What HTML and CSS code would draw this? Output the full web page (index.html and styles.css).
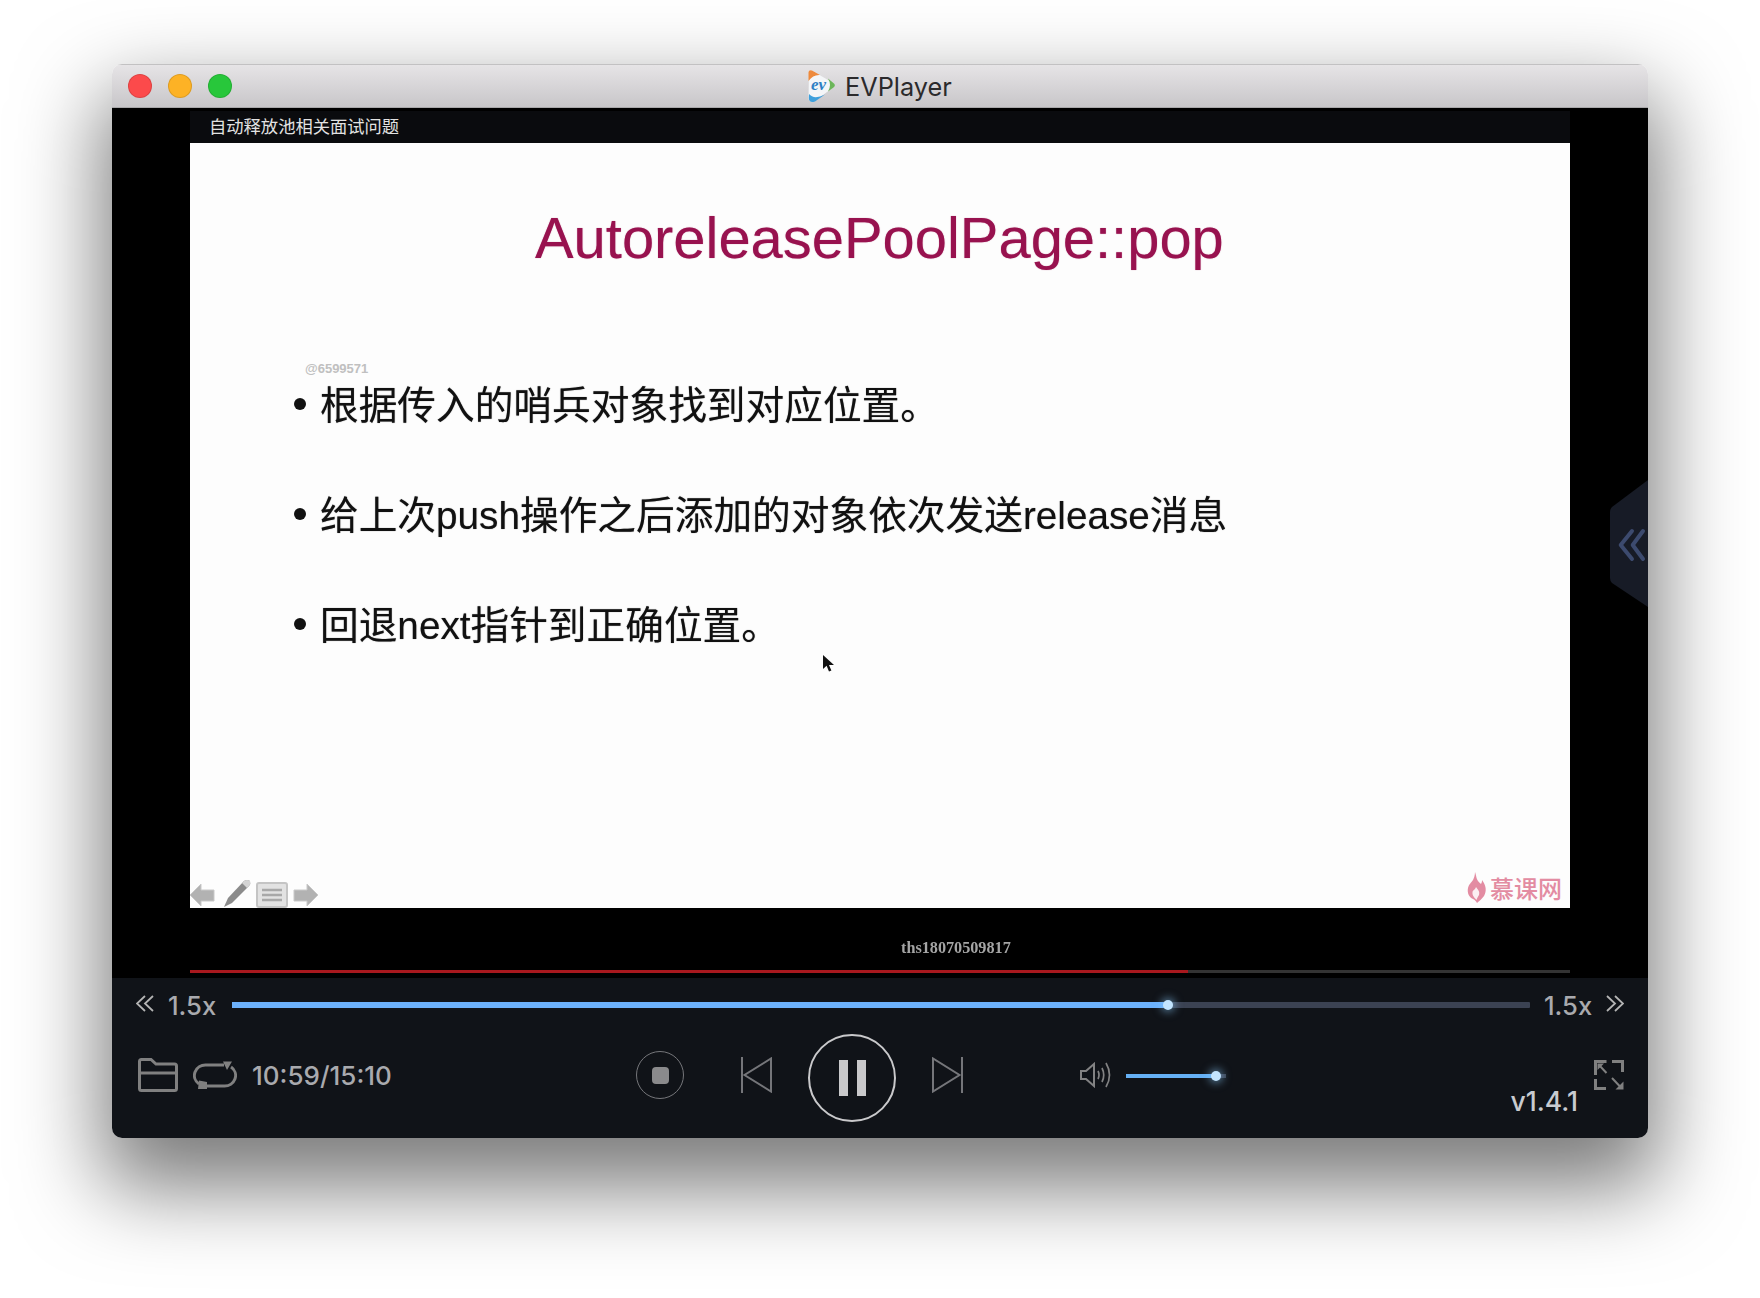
FILE: index.html
```html
<!DOCTYPE html>
<html lang="en">
<head>
    <meta charset="UTF-8" />
    <title>EVPlayer</title>
    <link rel="stylesheet" href="styles.css">
</head>
<body>
    <div class="window">
        <div class="titlebar">
            <div class="lights">
                <span class="light red"></span>
                <span class="light yellow"></span>
                <span class="light green"></span>
            </div>
            <div class="app-title">
                <svg class="app-logo" width="30" height="34" viewBox="0 0 30 34">
                    <path d="M3 3 Q2 0.5 6 1.5 L27 14 Q30 16 27 18.5 L9 32 Q3 34.5 2.5 29 Z" fill="#f4f6f8"/>
                    <path d="M2.5 12 L2.5 3.5 Q2.5 0.5 6 1.5 L14 6 Q7 5.5 2.5 12 Z" fill="#ee8a3c"/>
                    <path d="M22 9.5 L28 14.5 Q30 16.5 27.5 18.5 L22 22.5 Q26 16 22 9.5 Z" fill="#6cb65a"/>
                    <path d="M3 25 Q8 31 19 25.5 L9 32.5 Q3 34.5 2.8 29 Z" fill="#3fa0dc"/>
                    <text x="5" y="21" class="logo-text">ev</text>
                </svg>
                <span>EVPlayer</span>
            </div>
        </div>

        <div class="video">
            <div class="frame">
                <div class="caption">自动释放池相关面试问题</div>
                <div class="slide">
                    <h1>AutoreleasePoolPage::pop</h1>
                    <span class="user-id">@6599571</span>
                    <ul class="points">
                        <li>根据传入的哨兵对象找到对应位置。</li>
                        <li>给上次push操作之后添加的对象依次发送release消息</li>
                        <li>回退next指针到正确位置。</li>
                    </ul>

                    <svg class="pointer" width="14" height="20" viewBox="0 0 14 20">
                        <path d="M1 1 L1 15 L4.6 11.8 L7 17.5 L9.4 16.4 L7 11 L12 11 Z" fill="#111"/>
                    </svg>

                    <div class="slide-tools">
                        <svg width="29" height="26" viewBox="0 0 29 26">
                            <path d="M1 13 L12 2 V8 H25 V19 H12 V24 Z" fill="#b2b2b2" stroke="#c9c9c9"/>
                        </svg>
                        <svg width="30" height="30" viewBox="0 0 30 30">
                            <path d="M2 29 L6 20 L22 3 Q25 1 28 3 Q29 6 27 8 L10 25 Z" fill="#8b8b8b"/>
                            <path d="M22 3 Q25 1 28 3 Q29 6 27 8 L25 10 L20 5 Z" fill="#d4d4d4"/>
                        </svg>
                        <svg width="32" height="26" viewBox="0 0 32 26">
                            <rect x="1" y="1" width="30" height="24" rx="2" fill="#e2e2e2" stroke="#c4c4c4" stroke-width="2"/>
                            <path d="M6 8 H26 M6 13 H26 M6 18 H26" stroke="#a8a8a8" stroke-width="2.4"/>
                        </svg>
                        <svg width="28" height="26" viewBox="0 0 26 26">
                            <path d="M25 13 L14 2 V8 H1 V19 H14 V24 Z" fill="#b2b2b2" stroke="#c9c9c9"/>
                        </svg>
                    </div>

                    <div class="brand">
                        <svg width="20" height="31" viewBox="0 0 20 31">
                            <path d="M8 0 C10 6 9 8 14 12 C15 10 15 9 15 8 C19 13 20 19 17 24 C15 27 12 29 10 31 C9 29 8 28 6 27 C2 25 0 21 1 16 C2 12 4 11 6 8 C7 6 8 3 8 0 Z" fill="#e38ca2"/>
                            <path d="M9 15 C11 18 13 19 12 23 C11 25 10 26 9.5 28 C8 26 5 24 5.5 20 C6 18 8 18 9 15 Z" fill="#fbeef1"/>
                        </svg>
                        <span>慕课网</span>
                    </div>
                </div>
                <div class="frame-foot">
                    <div class="viewer">ths18070509817</div>
                    <div class="buffer"><div class="buffer-fill" style="width: 72.3%"></div></div>
                </div>
            </div>

            <svg class="side-handle" width="38" height="127" viewBox="0 0 38 127">
                <path d="M38 0 L2 27 Q0 29 0 32 V98 Q0 101 2 103 L38 127 Z" fill="#171b26"/>
                <path d="M22 51 L10.7 65 L22 79 M33 51 L22.7 65 L33 79" fill="none" stroke="#3c4a6e" stroke-width="4" stroke-linecap="round" stroke-linejoin="round"/>
            </svg>
        </div>

        <div class="controls">
            <div class="speed-row">
                <svg class="icon-thin" width="18" height="17" viewBox="0 0 18 17">
                    <path d="M9 1 L1 8.5 L9 16 M17 1 L9 8.5 L17 16"/>
                </svg>
                <span class="speed">1.5x</span>
                <div class="seek">
                    <div class="seek-fill" style="width: 72.1%"><span class="thumb"></span></div>
                </div>
                <span class="speed">1.5x</span>
                <svg class="icon-thin" width="18" height="17" viewBox="0 0 18 17">
                    <path d="M1 1 L9 8.5 L1 16 M9 1 L17 8.5 L9 16"/>
                </svg>
            </div>

            <div class="button-row">
                <div class="left-group">
                    <svg class="icon" width="40" height="34" viewBox="0 0 40 34">
                        <path d="M1.5 15 V3.5 Q1.5 1.5 3.5 1.5 H13 L18 6 H36.5 Q38.5 6 38.5 8 V30.5 Q38.5 32.5 36.5 32.5 H3.5 Q1.5 32.5 1.5 30.5 V15 H38.5"/>
                    </svg>
                    <svg width="44" height="28" viewBox="0 0 44 28">
                        <g fill="none" stroke="#808080" stroke-width="3">
                            <path d="M31 4 H13 A11 10.5 0 0 0 6 23"/>
                            <path d="M13 25 H31 A11 10.5 0 0 0 38 6"/>
                        </g>
                        <path d="M30 0.5 L39 0.5 L34 9 Z M6 19.5 L14 21 L14 28 L5 28 Z" fill="#808080"/>
                    </svg>
                    <span class="time">10:59/15:10</span>
                </div>

                <div class="stop"><span></span></div>
                <svg class="icon-prev" width="31" height="36" viewBox="0 0 31 36">
                    <path d="M1 0 V36 M30 1.5 V34.5 L3.5 18 Z"/>
                </svg>
                <div class="pause"><span></span><span></span></div>
                <svg class="icon-next" width="31" height="36" viewBox="0 0 31 36">
                    <path d="M30 0 V36 M1 1.5 V34.5 L27.5 18 Z"/>
                </svg>

                <svg class="icon-volume" width="33" height="26" viewBox="0 0 33 26">
                    <path d="M1 9 H6 L14 2 V24 L6 17 H1 Z" stroke-width="2"/>
                    <path d="M18 9 Q20 13 18 17 M22 6 Q25.5 13 22 20 M26 1 Q33 13 26 25" stroke-width="1.7"/>
                </svg>
                <div class="volume">
                    <div class="volume-fill" style="width: 90%"><span class="volume-thumb"></span></div>
                </div>

                <div class="right-group">
                    <span class="version">v1.4.1</span>
                    <svg class="icon-expand" width="30" height="30" viewBox="0 0 30 30">
                        <path d="M12.5 1.5 H1.5 V15 M18 1.5 H28.5 V12 M1.5 19 V28.5 H12" fill="none" stroke-width="3"/>
                        <path d="M5 5 L12.5 13 M18 18 L26 26.5" fill="none" stroke-width="2"/>
                        <path d="M3.5 3.5 H10 L3.5 10 Z M29.5 29.5 H21.5 L29.5 21.5 Z" stroke="none"/>
                    </svg>
                </div>
            </div>
        </div>
    </div>
</body>
</html>
```

FILE: styles.css
```css
:root {
  --panel: #101318;
  --blue: #6cb1fb;
  --track: #3b4252;
  --grey-icon: #808080;
  --text-grey: #a9aaae;
}

body {
  margin: 0;
  padding: 64px 112px 0;
  background-color: #fff;
  font-family: 'Inter', 'Liberation Sans', sans-serif;
}

.window {
  width: 1536px;
  height: 1074px;
  display: flex;
  flex-direction: column;
  border-radius: 10px;
  overflow: hidden;
  position: relative;
}

body::before {
  content: '';
  position: absolute;
  top: 64px;
  left: 112px;
  width: 1536px;
  height: 1074px;
  border-radius: 10px;
  box-shadow: 0 40px 84px 10px rgba(0, 0, 0, 0.52);
}

/* Title bar */
.titlebar {
  height: 44px;
  flex: none;
  display: flex;
  align-items: center;
  position: relative;
  box-sizing: border-box;
  border-top: 1px solid #c2c1c2;
  border-bottom: 1px solid #a9a8aa;
  background: linear-gradient(#e6e4e6, #c8c6c9);
}

.lights {
  display: flex;
  gap: 16px;
  padding-left: 16px;
}

.light {
  width: 24px;
  height: 24px;
  box-sizing: border-box;
  border-radius: 50%;
  border: 1px solid rgba(0, 0, 0, 0.12);
}

.red { background-color: #fc4a4b; }
.yellow { background-color: #fdb225; }
.green { background-color: #28c73b; }

.app-title {
  display: flex;
  align-items: center;
  gap: 9px;
  margin-left: 574px;
  font-size: 25.3px;
  color: #2b2a2c;
}

.logo-text {
  font-family: 'Liberation Serif', serif;
  font-style: italic;
  font-weight: 700;
  font-size: 17px;
  fill: #2f80c4;
}

/* Video */
.video {
  height: 870px;
  flex: none;
  position: relative;
  background-color: #000;
  padding-top: 3px;
  box-sizing: border-box;
}

.frame {
  margin: 0 78px;
}

.caption {
  height: 32px;
  padding-left: 19px;
  background-color: #0a0b0e;
  color: #e2e2e2;
  font-family: 'Noto Sans CJK SC', sans-serif;
  font-size: 17.3px;
  line-height: 30px;
}

.slide {
  height: 765px;
  box-sizing: border-box;
  padding-top: 50px;
  position: relative;
  background-color: #fdfdfd;
  font-family: 'Liberation Sans', 'Noto Sans CJK SC', sans-serif;
}

.slide h1 {
  margin: 0;
  padding-left: 345px;
  font-size: 57.9px;
  font-weight: 400;
  line-height: 90px;
  color: #98124f;
  text-shadow: 0 0 1px rgba(152, 18, 79, 0.6);
  filter: blur(0.3px);
}

.user-id {
  position: absolute;
  top: 218px;
  left: 115px;
  font-size: 13px;
  font-weight: 700;
  color: #c0c0c0;
}

.points {
  list-style: none;
  margin: 0;
  padding: 68px 0 0 104px;
  font-size: 38.7px;
  color: #111;
  text-shadow: 0 0 1px rgba(0, 0, 0, 0.55);
  filter: blur(0.3px);
}

.points li {
  height: 110px;
  line-height: 110px;
  display: flex;
  align-items: center;
  gap: 14px;
  white-space: nowrap;
}

.points li::before {
  content: '';
  width: 12px;
  height: 12px;
  margin-top: -4px;
  flex: none;
  border-radius: 50%;
  background-color: #111;
}

.pointer {
  position: absolute;
  top: 511px;
  left: 632px;
}

.slide-tools {
  position: absolute;
  left: -1px;
  bottom: 0;
  display: flex;
  align-items: flex-end;
  gap: 4px;
}

.brand {
  position: absolute;
  right: 8px;
  bottom: 3px;
  display: flex;
  align-items: center;
  gap: 3px;
  font-family: 'Noto Sans CJK SC', sans-serif;
  font-size: 24px;
  font-weight: 500;
  color: #e38ca2;
}

.frame-foot {
  height: 70px;
  box-sizing: border-box;
  padding-top: 30px;
}

.viewer {
  padding-left: 711px;
  font-family: 'Liberation Serif', serif;
  font-size: 16.2px;
  font-weight: 700;
  line-height: 20px;
  color: #a4a4a4;
  filter: blur(0.5px);
}

.buffer {
  height: 3px;
  margin-top: 12px;
  background-color: #333;
}

.buffer-fill {
  height: 100%;
  background-color: #a8181e;
}

.side-handle {
  position: absolute;
  top: 372px;
  right: 0;
}

/* Controls */
.controls {
  flex: 1;
  background-color: var(--panel);
}

.speed-row {
  height: 54px;
  padding: 0 24px;
  display: flex;
  align-items: center;
}

.icon-thin {
  flex: none;
  margin-top: -4px;
  fill: none;
  stroke: #b4b4b4;
  stroke-width: 1.8;
}

.speed {
  width: 48px;
  margin: 0 14px;
  font-size: 25.6px;
  font-weight: 500;
  white-space: nowrap;
  color: var(--text-grey);
}

.seek {
  flex: 1;
  height: 6px;
  margin: 0 0 0 2px;
  background-color: var(--track);
  border-radius: 1px;
}

.seek-fill {
  height: 100%;
  position: relative;
  background-color: var(--blue);
}

.thumb,
.volume-thumb {
  position: absolute;
  top: 50%;
  right: -5px;
  width: 10px;
  height: 10px;
  margin-top: -5px;
  border-radius: 50%;
  background-color: #c3e5ff;
  box-shadow: 0 0 8px 2px rgba(140, 205, 255, 0.55);
}

.button-row {
  height: 86px;
  display: flex;
  align-items: center;
  padding: 0 24px 0 26px;
}

.left-group {
  width: 498px;
  flex: none;
  display: flex;
  align-items: center;
  gap: 15px;
}

.icon {
  flex: none;
  fill: none;
  stroke: var(--grey-icon);
  stroke-width: 3;
}

.icon-expand {
  flex: none;
  fill: var(--grey-icon);
  stroke: var(--grey-icon);
}

.time {
  font-size: 26px;
  font-weight: 500;
  color: var(--text-grey);
}

.stop {
  width: 48px;
  height: 48px;
  flex: none;
  box-sizing: border-box;
  display: flex;
  align-items: center;
  justify-content: center;
  border: 1.5px solid #75767a;
  border-radius: 50%;
}

.stop span {
  width: 17px;
  height: 17px;
  border-radius: 4px;
  background-color: #8a8a8c;
}

.icon-prev,
.icon-next {
  flex: none;
  fill: none;
  stroke: #75767a;
  stroke-width: 2;
}

.icon-prev {
  margin-left: 57px;
}

.pause {
  width: 88px;
  height: 88px;
  flex: none;
  margin: 5px 36px 0;
  box-sizing: border-box;
  display: flex;
  align-items: center;
  justify-content: center;
  gap: 9px;
  border: 2.5px solid #c9c9cb;
  border-radius: 50%;
}

.pause span {
  width: 9px;
  height: 36px;
  background-color: #c9c9cb;
}

.icon-volume {
  flex: none;
  margin-left: 117px;
  fill: none;
  stroke: #828283;
}

.volume {
  width: 100px;
  height: 4px;
  flex: none;
  margin: 2px 0 0 13px;
  background-color: var(--track);
}

.volume-fill {
  height: 100%;
  position: relative;
  background-color: #65b0f5;
}

.right-group {
  height: 30px;
  margin-left: auto;
  display: flex;
  gap: 16px;
}

.version {
  margin-top: 29px;
  font-size: 26.5px;
  font-weight: 500;
  line-height: 24px;
  color: #c8cbd0;
}
```
